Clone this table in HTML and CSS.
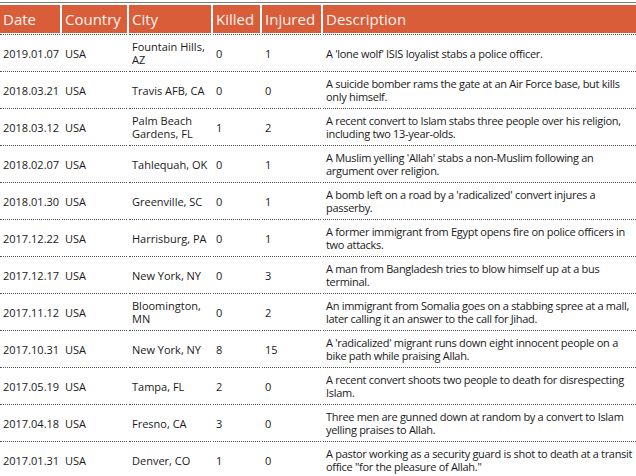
FILE: index.html
```html
<!DOCTYPE html>
<html>
<head>
<meta charset="utf-8">
<link rel="stylesheet" href="styles.css">
</head>
<body>
<div class="sheet">
  <div class="grid">
    <div class="th">Date</div>
    <div class="th">Country</div>
    <div class="th">City</div>
    <div class="th">Killed</div>
    <div class="th">Injured</div>
    <div class="th">Description</div>

    <div class="td">2019.01.07</div><div class="td">USA</div><div class="td">Fountain Hills, AZ</div><div class="td">0</div><div class="td">1</div><div class="td desc">A 'lone wolf' ISIS loyalist stabs a police officer.</div>
    <div class="td">2018.03.21</div><div class="td">USA</div><div class="td">Travis AFB, CA</div><div class="td">0</div><div class="td">0</div><div class="td desc">A suicide bomber rams the gate at an Air Force base, but kills only himself.</div>
    <div class="td">2018.03.12</div><div class="td">USA</div><div class="td">Palm Beach Gardens, FL</div><div class="td">1</div><div class="td">2</div><div class="td desc">A recent convert to Islam stabs three people over his religion, including two 13-year-olds.</div>
    <div class="td">2018.02.07</div><div class="td">USA</div><div class="td">Tahlequah, OK</div><div class="td">0</div><div class="td">1</div><div class="td desc">A Muslim yelling 'Allah' stabs a non-Muslim following an argument over religion.</div>
    <div class="td">2018.01.30</div><div class="td">USA</div><div class="td">Greenville, SC</div><div class="td">0</div><div class="td">1</div><div class="td desc">A bomb left on a road by a 'radicalized' convert injures a passerby.</div>
    <div class="td">2017.12.22</div><div class="td">USA</div><div class="td">Harrisburg, PA</div><div class="td">0</div><div class="td">1</div><div class="td desc">A former immigrant from Egypt opens fire on police officers in two attacks.</div>
    <div class="td">2017.12.17</div><div class="td">USA</div><div class="td">New York, NY</div><div class="td">0</div><div class="td">3</div><div class="td desc">A man from Bangladesh tries to blow himself up at a bus terminal.</div>
    <div class="td">2017.11.12</div><div class="td">USA</div><div class="td">Bloomington, MN</div><div class="td">0</div><div class="td">2</div><div class="td desc">An immigrant from Somalia goes on a stabbing spree at a mall, later calling it an answer to the call for Jihad.</div>
    <div class="td">2017.10.31</div><div class="td">USA</div><div class="td">New York, NY</div><div class="td">8</div><div class="td">15</div><div class="td desc">A 'radicalized' migrant runs down eight innocent people on a bike path while praising Allah.</div>
    <div class="td">2017.05.19</div><div class="td">USA</div><div class="td">Tampa, FL</div><div class="td">2</div><div class="td">0</div><div class="td desc">A recent convert shoots two people to death for disrespecting Islam.</div>
    <div class="td">2017.04.18</div><div class="td">USA</div><div class="td">Fresno, CA</div><div class="td">3</div><div class="td">0</div><div class="td desc">Three men are gunned down at random by a convert to Islam yelling praises to Allah.</div>
    <div class="td">2017.01.31</div><div class="td">USA</div><div class="td">Denver, CO</div><div class="td">1</div><div class="td">0</div><div class="td desc">A pastor working as a security guard is shot to death at a transit office "for the pleasure of Allah."</div>
  </div>
</div>
</body>
</html>
```

FILE: styles.css
```css
html, body {
  margin: 0;
  padding: 0;
  background: #ffffff;
}

.sheet {
  margin-top: 2px;
  border-top: 1px solid #7b7b7b;
  padding-top: 2px;
  width: 636px;
  overflow: hidden;
  font-family: "Open Sans", "Noto Sans", sans-serif;
}

.grid {
  display: grid;
  grid-template-columns: 60px 65px 82px 47px 59px 313px;
  column-gap: 2px;
}

.th {
  background: #da5d3a;
  color: #fdf3ef;
  font-size: 15px;
  height: 28px;
  line-height: 28px;
  padding-left: 3px;
  margin-bottom: 1px;
  white-space: nowrap;
  overflow: hidden;
}

.td {
  display: flex;
  align-items: center;
  border-top: 1px dotted #555555;
  padding: 5px 2px 5px 3px;
  min-height: 26px;
  font-size: 11px;
  line-height: 13px;
  color: #1a1a1a;
}

.desc {
  letter-spacing: -0.3px;
}
```
